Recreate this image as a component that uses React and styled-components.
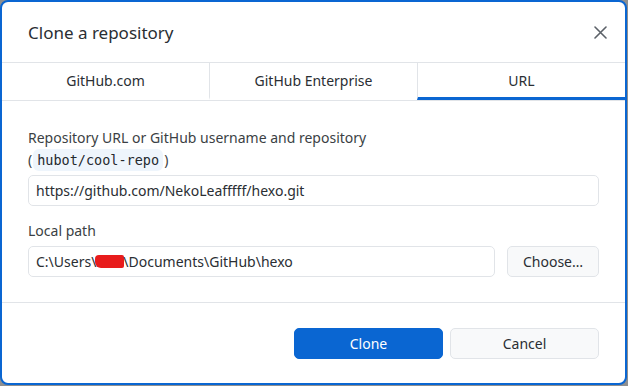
import React from "react";
import styled, { createGlobalStyle } from "styled-components";

const GlobalStyle = createGlobalStyle`
  html, body {
    margin: 0;
    padding: 0;
    background: #8f8f8f;
  }
  body {
    font-family: "Noto Sans", "Liberation Sans", sans-serif;
  }
`;

export const Dialog = styled.div`
  box-sizing: border-box;
  width: 627px;
  height: 385px;
  background: #fff;
  border: 2px solid #0a66d2;
  border-radius: 8px;
  display: flex;
  flex-direction: column;
  overflow: hidden;
`;

export const Header = styled.div`
  height: 60px;
  display: flex;
  align-items: center;
  justify-content: space-between;
  padding: 0 16px 0 26px;
`;

export const Title = styled.h1`
  margin: 0;
  font-size: 17px;
  font-weight: 400;
  color: #2a2e33;
`;

export const CloseBtn = styled.button`
  border: none;
  background: none;
  padding: 0;
  width: 18px;
  height: 18px;
  display: flex;
  align-items: center;
  justify-content: center;
  cursor: pointer;
`;

export const Tabs = styled.div`
  display: flex;
  border-top: 1px solid #e1e4e8;
  border-bottom: 1px solid #e1e4e8;
`;

export const Tab = styled.div`
  flex: 1;
  height: 34px;
  display: flex;
  align-items: center;
  justify-content: center;
  font-size: 14px;
  color: #2a2e33;
  border-left: ${(props) => (props.first ? "none" : "1px solid #e1e4e8")};
  border-bottom: 3px solid ${(props) => (props.active ? "#0a66d2" : "transparent")};
`;

export const Body = styled.div`
  padding: 26px 26px 0 26px;
  display: flex;
  flex-direction: column;
`;

export const Label = styled.div`
  font-size: 14px;
  color: #3b3f44;
  line-height: 22px;
  margin-top: ${(props) => props.top || "0"};
`;

export const Code = styled.code`
  font-family: "DejaVu Sans Mono", "Liberation Mono", monospace;
  font-size: 13.5px;
  background: #eef5fc;
  border-radius: 6px;
  padding: 3px 4px;
  margin: 0 1px 0 1px;
  color: #24292e;
`;

export const Input = styled.div`
  box-sizing: border-box;
  flex: ${(props) => (props.grow ? 1 : "none")};
  height: 31px;
  border: 1px solid #e1e4e8;
  border-radius: 5px;
  display: flex;
  align-items: center;
  padding: 0 7px;
  font-size: 14px;
  color: #2a2e33;
  margin-top: ${(props) => props.top || "0"};
`;

export const Row = styled.div`
  display: flex;
  gap: 12px;
  margin-top: 4px;
`;

export const Redact = styled.span`
  display: inline-block;
  width: 29px;
  height: 13px;
  background: #e81c1c;
  border-radius: 4px 2px 2px 6px;
  vertical-align: -2px;
  margin: 0 -1px;
`;

export const Button = styled.button`
  box-sizing: border-box;
  height: 31px;
  width: ${(props) => props.w || "auto"};
  border-radius: 5px;
  font-family: inherit;
  font-size: 14px;
  border: 1px solid ${(props) => (props.primary ? "#0a66d2" : "#e1e4e8")};
  background: ${(props) => (props.primary ? "#0a66d2" : "#f8f9fa")};
  color: ${(props) => (props.primary ? "#fff" : "#2a2e33")};
  padding: 0;
`;

export const Footer = styled.div`
  margin-top: auto;
  border-top: 1px solid #e1e4e8;
  height: 80px;
  display: flex;
  align-items: center;
  justify-content: flex-end;
  gap: 7px;
  padding: 0 26px 0 0;
`;

function CloseIcon() {
  return (
    <svg width="13" height="13" viewBox="0 0 13 13">
      <path d="M1 1L12 12M12 1L1 12" stroke="#5b6168" strokeWidth="1.6" strokeLinecap="round" />
    </svg>
  );
}

export default function App() {
  return (
    <>
      <GlobalStyle />
      <Dialog>
        <Header>
          <Title>Clone a repository</Title>
          <CloseBtn>
            <CloseIcon />
          </CloseBtn>
        </Header>
        <Tabs>
          <Tab first>GitHub.com</Tab>
          <Tab>GitHub Enterprise</Tab>
          <Tab active>URL</Tab>
        </Tabs>
        <Body>
          <Label>Repository URL or GitHub username and repository</Label>
          <Label>
            (<Code>hubot/cool-repo</Code>)
          </Label>
          <Input top="4px">https://github.com/NekoLeafffff/hexo.git</Input>
          <Label top="14px">Local path</Label>
          <Row>
            <Input grow>
              C:\Users\<Redact />\Documents\GitHub\hexo
            </Input>
            <Button w="92px">Choose…</Button>
          </Row>
        </Body>
        <Footer>
          <Button primary w="149px">
            Clone
          </Button>
          <Button w="149px">Cancel</Button>
        </Footer>
      </Dialog>
    </>
  );
}
